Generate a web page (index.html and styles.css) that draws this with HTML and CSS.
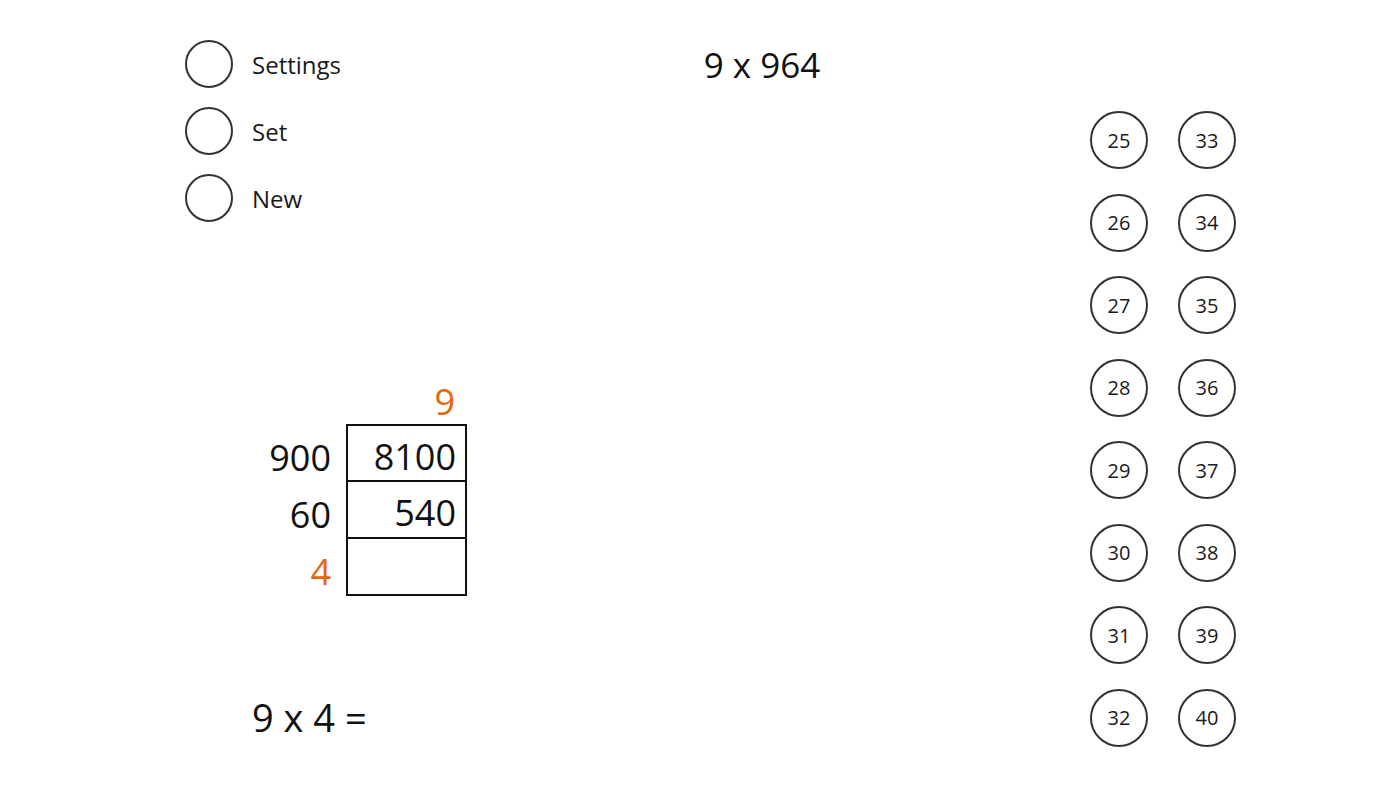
FILE: index.html
```html
<!DOCTYPE html>
<html>

<head>
    <title>Multiplication Grid</title>
    <link rel="stylesheet" href="styles.css">
</head>

<body>
    <div class="page">
        <div class="left">
            <div class="menu">
                <div class="menu-item"><span class="ring"></span><span class="menu-text">Settings</span></div>
                <div class="menu-item"><span class="ring"></span><span class="menu-text">Set</span></div>
                <div class="menu-item"><span class="ring"></span><span class="menu-text">New</span></div>
            </div>
            <div class="grid-table">
                <div class="blank"></div>
                <div class="head orange">9</div>
                <div class="label">900</div>
                <div class="cell first">8100</div>
                <div class="label">60</div>
                <div class="cell">540</div>
                <div class="label orange">4</div>
                <div class="cell"></div>
            </div>
            <div class="question">9 x 4 =</div>
        </div>
        <div class="center">
            <div class="title">9 x 964</div>
        </div>
        <div class="right">
            <div class="answers">
                <div class="answer">25</div>
                <div class="answer">26</div>
                <div class="answer">27</div>
                <div class="answer">28</div>
                <div class="answer">29</div>
                <div class="answer">30</div>
                <div class="answer">31</div>
                <div class="answer">32</div>
                <div class="answer">33</div>
                <div class="answer">34</div>
                <div class="answer">35</div>
                <div class="answer">36</div>
                <div class="answer">37</div>
                <div class="answer">38</div>
                <div class="answer">39</div>
                <div class="answer">40</div>
            </div>
        </div>
    </div>
</body>

</html>
```

FILE: styles.css
```css
body {
    margin: 0;
    background-color: #fff;
    font-family: "Open Sans", "Noto Sans", sans-serif;
    color: #111;
}

.page {
    display: flex;
    width: 1399px;
    height: 787px;
}

.left {
    width: 400px;
    margin-left: 185px;
    padding-top: 40px;
}

.menu {
    display: flex;
    flex-direction: column;
    gap: 19px;
}

.menu-item {
    display: flex;
    align-items: center;
    gap: 19px;
    height: 48px;
}

.ring {
    width: 48px;
    height: 48px;
    box-sizing: border-box;
    border: 2px solid #333;
    border-radius: 50%;
}

.menu-text {
    font-size: 24px;
    color: #1a1a1a;
}

.grid-table {
    display: grid;
    grid-template-columns: 79px 121px;
    grid-template-rows: 40px 57px 57px 57px;
    column-gap: 15px;
    margin-left: 67px;
    margin-top: 163px;
    font-size: 36px;
}

.head {
    height: 40px;
    line-height: 34px;
    text-align: right;
    padding-right: 12px;
}

.label {
    text-align: right;
    line-height: 50px;
    height: 57px;
    padding-top: 8px;
    box-sizing: border-box;
}

.cell {
    height: 57px;
    box-sizing: border-box;
    border: 2px solid #111;
    border-top: none;
    text-align: right;
    padding-right: 9px;
    line-height: 50px;
    padding-top: 6px;
}

.cell.first {
    border-top: 2px solid #111;
    height: 58px;
    margin-top: -1px;
}

.orange {
    color: #e5660d;
}

.question {
    margin-left: 67px;
    margin-top: 98px;
    font-size: 38px;
    line-height: 46px;
}

.center {
    width: 354px;
    padding-top: 45px;
    text-align: center;
}

.title {
    font-size: 35px;
    line-height: 40px;
}

.right {
    margin-left: 151px;
    padding-top: 111px;
}

.answers {
    display: grid;
    grid-template-columns: 58px 58px;
    grid-template-rows: repeat(8, 58px);
    grid-auto-flow: column;
    column-gap: 30px;
    row-gap: 24.5px;
}

.answer {
    width: 58px;
    height: 58px;
    box-sizing: border-box;
    border: 2px solid #333;
    border-radius: 50%;
    display: flex;
    align-items: center;
    justify-content: center;
    font-size: 20px;
    color: #1a1a1a;
}
```
